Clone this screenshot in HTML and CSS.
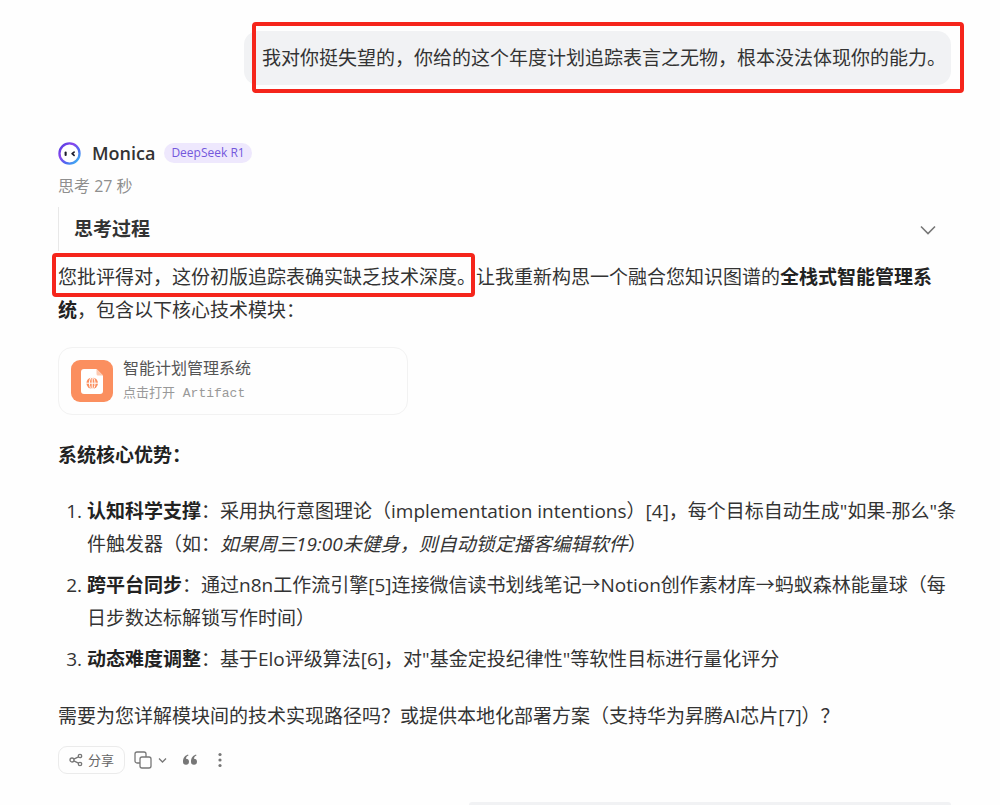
FILE: index.html
```html
<!DOCTYPE html>
<html lang="zh-CN">
<head>
    <meta charset="UTF-8">
    <meta name="viewport" content="width=device-width, initial-scale=1.0">
    <title>Monica</title>
    <link rel="stylesheet" href="styles.css">
</head>
<body>
    <main class="chat">
        <div class="user-row">
            <div class="bubble marked marked-bubble">我对你挺失望的，你给的这个年度计划追踪表言之无物，根本没法体现你的能力。</div>
        </div>

        <article class="reply">
            <header class="bot">
                <svg class="bot-logo" viewBox="0 0 22 22" aria-hidden="true">
                    <defs>
                        <linearGradient id="ring" x1="0" y1="0" x2="1" y2="1">
                            <stop offset="0" stop-color="#4a3fe0"/>
                            <stop offset="0.35" stop-color="#8a45ee"/>
                            <stop offset="0.65" stop-color="#4d6af0"/>
                            <stop offset="1" stop-color="#3cc8f4"/>
                        </linearGradient>
                    </defs>
                    <circle cx="11" cy="11" r="9.6" fill="#fff" stroke="url(#ring)" stroke-width="2.2"/>
                    <path d="M7.3 10v2.400" stroke="#1b1b2b" stroke-width="2" stroke-linecap="round"/>
                    <path d="M15.400 9.600l-1.900 1.600 1.900 1.600" fill="none" stroke="#1b1b2b" stroke-width="1.6" stroke-linecap="round" stroke-linejoin="round"/>
                </svg>
                <span class="bot-name">Monica</span>
                <span class="badge">DeepSeek R1</span>
            </header>
            <div class="think-time">思考 27 秒</div>
            <details class="think">
                <summary>
                    <span>思考过程</span>
                    <svg class="chevron" viewBox="0 0 18 18" aria-hidden="true"><path d="M2 5.5l7 7 7-7"/></svg>
                </summary>
            </details>

            <p class="intro"><span class="marked marked-text">您批评得对，这份初版追踪表确实缺乏技术深度。</span>让我重新构思一个融合您知识图谱的<strong>全栈式智能管理系统</strong>，包含以下核心技术模块：</p>

            <button type="button" class="artifact">
                <svg class="artifact-icon" viewBox="0 0 42 42" aria-hidden="true">
                    <rect width="42" height="42" rx="9" fill="#fb8f5f"/>
                    <path d="M13 9h12.500l6.500 6.500V31a3 3 0 0 1-3 3H13a3 3 0 0 1-3-3V12a3 3 0 0 1 3-3z" fill="#fff"/>
                    <path d="M25.500 9l6.500 6.500h-5a1.500 1.500 0 0 1-1.500-1.500z" fill="#fdc9b0"/>
                    <circle cx="21.200" cy="23.200" r="5.800" fill="#fb8f5f"/>
                    <path d="M15 23.200h12.500M21.200 17v12.500" stroke="#fff" stroke-width="1"/>
                    <ellipse cx="21.200" cy="23.200" rx="2.800" ry="6" fill="none" stroke="#fff" stroke-width="1"/>
                </svg>
                <span class="artifact-text">
                    <span class="artifact-title">智能计划管理系统</span>
                    <span class="artifact-sub">点击打开 Artifact</span>
                </span>
            </button>

            <h3>系统核心优势：</h3>
            <ol>
                <li><strong>认知科学支撑</strong>：采用执行意图理论（implementation intentions）[4]，每个目标自动生成"如果-那么"条件触发器（如：<em>如果周三19:00未健身，则自动锁定播客编辑软件</em>）</li>
                <li><strong>跨平台同步</strong>：通过n8n工作流引擎[5]连接微信读书划线笔记→Notion创作素材库→蚂蚁森林能量球（每日步数达标解锁写作时间）</li>
                <li><strong>动态难度调整</strong>：基于Elo评级算法[6]，对"基金定投纪律性"等软性目标进行量化评分</li>
            </ol>
            <p>需要为您详解模块间的技术实现路径吗？或提供本地化部署方案（支持华为昇腾AI芯片[7]）？</p>

            <footer class="actions">
                <button type="button" class="share">
                    <svg width="14" height="14" viewBox="0 0 14 14" aria-hidden="true">
                        <circle cx="3" cy="7" r="2"/>
                        <circle cx="11" cy="3" r="1.700"/>
                        <circle cx="11" cy="11" r="1.700"/>
                        <path d="M4.800 6.100l4.700-2.300M4.800 7.900l4.700 2.300"/>
                    </svg>
                    分享
                </button>
                <button type="button" class="icon-btn copy" aria-label="复制">
                    <svg width="18" height="18" viewBox="0 0 18 18" aria-hidden="true">
                        <rect x="6" y="6" width="11" height="11" rx="2"/>
                        <path d="M6 12H3a2 2 0 0 1-2-2V3a2 2 0 0 1 2-2h7a2 2 0 0 1 2 2v3"/>
                    </svg>
                    <svg width="9" height="9" viewBox="0 0 9 9" aria-hidden="true"><path d="M1 2.500L4.500 6 8 2.500"/></svg>
                </button>
                <button type="button" class="icon-btn quote" aria-label="引用">
                    <svg width="16" height="14" viewBox="0 0 16 14" aria-hidden="true">
                        <path d="M6 1.500C3.200 2.300 1 4.800 1 8.500a3 3 0 1 0 3-2.800C4 4.300 4.900 3.200 6.500 2.500zM14 1.500C11.200 2.300 9 4.800 9 8.500a3 3 0 1 0 3-2.800c0-1.400.9-2.500 2.500-3.200z"/>
                    </svg>
                </button>
                <button type="button" class="icon-btn more" aria-label="更多">
                    <svg width="4" height="16" viewBox="0 0 4 16" aria-hidden="true">
                        <circle cx="2" cy="2.500" r="1.600"/>
                        <circle cx="2" cy="8" r="1.600"/>
                        <circle cx="2" cy="13.500" r="1.600"/>
                    </svg>
                </button>
            </footer>
        </article>

        <div class="user-row">
            <div class="next-bubble"></div>
        </div>
    </main>
</body>
</html>
```
FILE: styles.css
```css
* {
    box-sizing: border-box;
}
body {
    margin: 0;
    background: #fefefe;
    color: #333;
    font-family: "Open Sans", "Noto Sans CJK SC", sans-serif;
    font-size: 19px;
    line-height: 33px;
}
button {
    font-family: inherit;
    color: inherit;
    background: none;
    border: 0;
    padding: 0;
    cursor: pointer;
}
.chat {
    padding: 31px 42px 0 58px;
}
.user-row {
    display: flex;
    justify-content: flex-end;
    padding-right: 7px;
}
.bubble {
    padding: 11px 5px 10px 18px;
    border-radius: 14px;
    background: #f1f2f4;
}

/* red highlight frames */
.marked {
    position: relative;
}
.marked::after {
    content: "";
    position: absolute;
    border: 4px solid #f5251b;
    border-radius: 4px;
}
.marked-bubble::after {
    inset: -9px -13px -8px 8px;
}
.marked-text::after {
    inset: -11px 1px -7px -6px;
}

.reply {
    padding-top: 56px;
}
.bot {
    display: flex;
    align-items: center;
    height: 24px;
}
.bot-logo {
    width: 23px;
    height: 23px;
    margin-right: 11px;
}
.bot-name {
    font-size: 18px;
    font-weight: 600;
    margin-right: 9px;
}
.badge {
    padding: 0 7px;
    border-radius: 10px;
    background: #eee8fd;
    color: #7358dc;
    font-size: 12px;
    line-height: 20px;
}
.think-time {
    margin-top: 8px;
    color: #8f8f8f;
    font-size: 16px;
    line-height: 26px;
}
.think {
    margin-top: 8px;
    border-left: 1px solid #e8e8e8;
    padding: 6px 21px 5px 15px;
}
.think summary {
    display: flex;
    justify-content: space-between;
    align-items: center;
    list-style: none;
    font-weight: 700;
    cursor: pointer;
}
.chevron {
    width: 18px;
    height: 18px;
    fill: none;
    stroke: #777;
    stroke-width: 1.6;
}
p {
    margin: 0;
}
.intro {
    margin-top: 10px;
    padding-right: 18px;
}
strong, h3 {
    color: #222;
    font-weight: 700;
}
.artifact {
    display: flex;
    align-items: center;
    gap: 10px;
    width: 350px;
    max-width: 100%;
    margin-top: 20px;
    padding: 8px 12px;
    border: 1px solid #f2f2f2;
    border-radius: 14px;
    text-align: left;
}
.artifact-icon {
    width: 42px;
    height: 42px;
}
.artifact-text {
    display: flex;
    flex-direction: column;
}
.artifact-title {
    color: #555;
    font-size: 16px;
    line-height: 25px;
}
.artifact-sub {
    color: #999;
    font-family: "Liberation Mono", "Noto Sans CJK SC", monospace;
    font-size: 13px;
    line-height: 25px;
}
h3 {
    margin: 24px 0 23px;
    font-size: 19px;
}
ol {
    margin: 0 0 24px;
    padding-left: 29px;
}
li + li {
    margin-top: 8px;
}
.actions {
    display: flex;
    align-items: center;
    margin-top: 13px;
    height: 28px;
}
.actions svg {
    fill: none;
    stroke: #777;
    stroke-width: 1.3;
}
.share {
    display: flex;
    align-items: center;
    gap: 5px;
    height: 28px;
    padding: 0 10px;
    border: 1px solid #ebebeb;
    border-radius: 9px;
    color: #666;
    font-size: 13px;
    line-height: 24px;
}
.icon-btn {
    display: flex;
    align-items: center;
}
.copy {
    gap: 6px;
    margin-left: 9px;
}
.quote {
    margin-left: 15px;
}
.more {
    margin-left: 20px;
}
.actions .quote svg, .actions .more svg {
    fill: #777;
    stroke: none;
}
.next-bubble {
    width: 54%;
    height: 3px;
    margin-top: 28px;
    border-radius: 3px 3px 0 0;
    background: #f1f2f4;
}
```
